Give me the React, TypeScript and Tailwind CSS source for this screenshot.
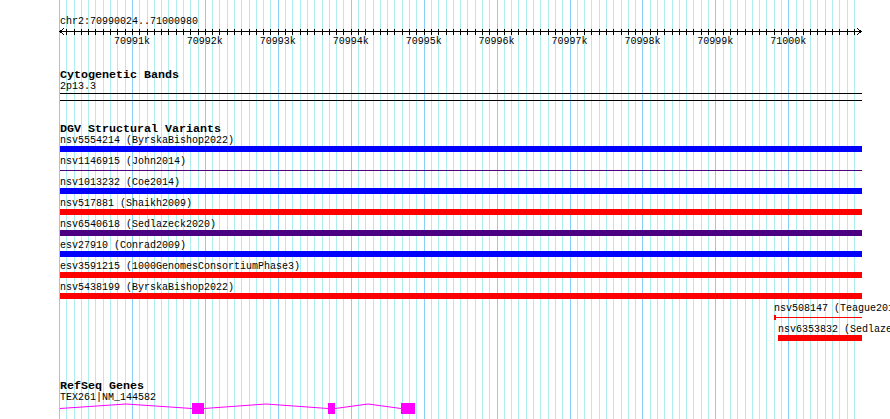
import React from 'react';

const PX_PER_STEP = 7.293;
const GRID_START = 59;
const TRACK_LEFT = 60;
const TRACK_RIGHT = 862;

const mono = { fontFamily: '"Liberation Mono", "DejaVu Sans Mono", monospace' };

type Variant = {
  label: string;
  color: string;
  start: number;
  end: number;
  thin?: boolean;
  startBox?: boolean;
};

const variants: Variant[] = [
  { label: 'nsv5554214 (ByrskaBishop2022)', color: '#0000ff', start: 60, end: 862 },
  { label: 'nsv1146915 (John2014)', color: '#4b0082', start: 60, end: 862, thin: true },
  { label: 'nsv1013232 (Coe2014)', color: '#0000ff', start: 60, end: 862 },
  { label: 'nsv517881 (Shaikh2009)', color: '#ff0000', start: 60, end: 862 },
  { label: 'nsv6540618 (Sedlazeck2020)', color: '#4b0082', start: 60, end: 862 },
  { label: 'esv27910 (Conrad2009)', color: '#0000ff', start: 60, end: 862 },
  { label: 'esv3591215 (1000GenomesConsortiumPhase3)', color: '#ff0000', start: 60, end: 862 },
  { label: 'nsv5438199 (ByrskaBishop2022)', color: '#ff0000', start: 60, end: 862 },
  { label: 'nsv508147 (Teague2010)', color: '#ff0000', start: 774, end: 862, thin: true, startBox: true },
  { label: 'nsv6353832 (Sedlazeck2020)', color: '#ff0000', start: 778, end: 862 },
];

const gridXs = Array.from({ length: 110 }, (_, k) => ({
  x: Math.round(GRID_START + k * PX_PER_STEP),
  major: k % 10 === 0,
}));

const Grid = () => (
  <svg className="absolute inset-0" width={890} height={419} shapeRendering="crispEdges">
    {gridXs.map((g, i) => (
      <rect key={i} x={g.x} y={0} width={1} height={419} fill={g.major ? '#87cefa' : '#afeeee'} />
    ))}
  </svg>
);

const Ruler = () => {
  const labels = Array.from({ length: 10 }, (_, i) => ({
    x: GRID_START + (i + 1) * 10 * PX_PER_STEP,
    text: `${70991 + i}k`,
  }));
  return (
    <svg width={890} height={23} className="block -ml-[60px]" shapeRendering="crispEdges">
      <rect x={TRACK_LEFT} y={4} width={TRACK_RIGHT - TRACK_LEFT} height={1} fill="#000" />
      {gridXs.slice(1).map((g, i) => (
        <rect key={i} x={g.x} y={2} width={1} height={6} fill="#000" />
      ))}
      <polyline points="64,1 60,4.5 64,8" fill="none" stroke="#000" strokeWidth={1} />
      <polyline points="857,1 861,4.5 857,8" fill="none" stroke="#000" strokeWidth={1} />
      {labels.map((l) => (
        <text key={l.text} x={l.x} y={17} textAnchor="middle" fontSize={10} fill="#000" style={mono}>
          {l.text}
        </text>
      ))}
    </svg>
  );
};

const TrackTitle: React.FC<{ title: string; className?: string }> = ({ title, className }) => (
  <div className={`h-[12px] leading-[12px] text-[11.67px] font-bold whitespace-nowrap ${className ?? ''}`}>{title}</div>
);

const VariantRow: React.FC<{ v: Variant }> = ({ v }) => {
  const offset = v.start - TRACK_LEFT;
  return (
    <div className="h-[21px]">
      <div className="h-[10px] leading-[10px] text-[10px] whitespace-nowrap" style={{ marginLeft: offset }}>
        {v.label}
      </div>
      <div className="h-[6px] flex items-center relative" style={{ marginLeft: offset, width: v.end - v.start }}>
        {v.thin ? (
          <div className="h-px w-full" style={{ backgroundColor: v.color }} />
        ) : (
          <div className="h-[6px] w-full" style={{ backgroundColor: v.color }} />
        )}
        {v.startBox && <div className="absolute left-0 top-px h-[5px] w-[2px]" style={{ backgroundColor: v.color }} />}
      </div>
    </div>
  );
};

const GeneModel = () => {
  const mid = 5.5;
  const peak = 1;
  const exons = [
    [192, 204],
    [328, 335],
    [401, 415],
  ];
  const introns = [
    [60, 192],
    [204, 328],
    [335, 401],
  ];
  return (
    <svg width={890} height={12} className="block -ml-[60px]">
      {introns.map(([a, b], i) => (
        <polyline
          key={i}
          points={`${a},${mid} ${(a + b) / 2},${peak} ${b},${mid}`}
          fill="none"
          stroke="#ff00ff"
          strokeWidth={1}
        />
      ))}
      {exons.map(([a, b], i) => (
        <rect key={i} x={a} y={0} width={b - a} height={11} fill="#ff00ff" shapeRendering="crispEdges" />
      ))}
    </svg>
  );
};

export default function App() {
  return (
    <div className="relative w-[890px] h-[419px] overflow-hidden bg-white text-black" style={mono}>
      <Grid />
      <div className="relative pl-[60px] pt-[17px]">
        <div className="h-[10px] leading-[10px] text-[10px]">chr2:70990024..71000980</div>
        <Ruler />

        <TrackTitle title="Cytogenetic Bands" className="mt-[19px]" />
        <div className="h-[10px] leading-[10px] text-[10px] mt-px">2p13.3</div>
        <div className="mt-px h-px w-[802px] bg-black" />
        <div className="mt-[6px] h-px w-[802px] bg-black" />

        <TrackTitle title="DGV Structural Variants" className="mt-[22px]" />
        <div className="mt-px">
          {variants.map((v) => (
            <VariantRow key={v.label} v={v} />
          ))}
        </div>

        <TrackTitle title="RefSeq Genes" className="mt-[34px]" />
        <div className="h-[10px] leading-[10px] text-[10px] mt-px">TEX261|NM_144582</div>
        <GeneModel />
      </div>
    </div>
  );
}
